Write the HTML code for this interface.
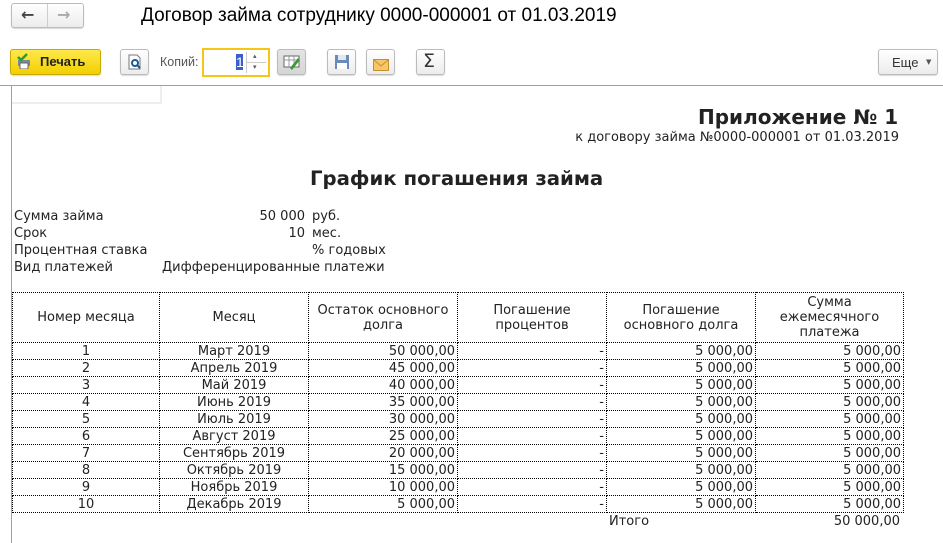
<!DOCTYPE html>
<html><head><meta charset="utf-8"><style>
*{margin:0;padding:0;box-sizing:border-box}
body{width:943px;height:543px;overflow:hidden;background:#fff;position:relative;font-family:"DejaVu Sans",Verdana,sans-serif;color:#222}
.a{position:absolute;white-space:nowrap}
.btn{position:absolute;border:1px solid #bbb;border-radius:3px;background:linear-gradient(#fff,#ececec);box-shadow:0 1px 1px rgba(0,0,0,.15)}
.t{font-size:13px}
table{position:absolute;left:12px;top:292px;border-collapse:collapse;table-layout:fixed;font-size:13px}
td{border:1px dotted #000;height:17px;line-height:15px;padding:1px 2px 0;white-space:nowrap;overflow:hidden}
td.c{text-align:center}td.r{text-align:right}
tr.h td{height:50px;text-align:center;white-space:normal;line-height:15px;padding:0 5px}
</style></head><body>
<div class="btn" style="left:11px;top:3px;width:73px;height:25px"></div>
<div class="a" style="left:47px;top:4px;width:1px;height:23px;background:#ccc"></div>
<div class="a" style="left:21px;top:5px;font-size:16px;font-weight:bold;color:#444">&#8592;</div>
<div class="a" style="left:57px;top:5px;font-size:16px;font-weight:bold;color:#aaa">&#8594;</div>
<div class="a" style="left:141px;top:5px;font-family:'Liberation Sans',sans-serif;font-size:19px;color:#000">Договор займа сотруднику 0000-000001 от 01.03.2019</div>

<div class="btn" style="left:10px;top:49px;width:91px;height:26px;background:linear-gradient(#ffe94a,#f2cf00);border-color:#c9a800"></div>
<div class="a" style="left:16px;top:53px;width:16px;height:16px"><svg width="16" height="16"><rect x="2" y="7" width="12" height="6" fill="#7a8a9a"/><rect x="4" y="10" width="8" height="6" fill="#fff" stroke="#666"/><path d="M2 4l3 3 6-6" stroke="#2a9a3a" stroke-width="2.5" fill="none"/></svg></div>
<div class="a" style="left:40px;top:54px;font-family:'Liberation Sans',sans-serif;font-size:13px;font-weight:bold;color:#222">Печать</div>
<div class="btn" style="left:120px;top:49px;width:29px;height:26px"></div>
<div class="a" style="left:127px;top:54px"><svg width="16" height="16"><path d="M2 1h8l3 3v11H2z" fill="#fff" stroke="#777"/><circle cx="8" cy="9" r="3" fill="none" stroke="#1a5a9a" stroke-width="2"/><path d="M10 11l3 3" stroke="#1a5a9a" stroke-width="2"/></svg></div>
<div class="a" style="left:160px;top:55px;font-family:'Liberation Sans',sans-serif;font-size:12.5px;color:#555">Копий:</div>
<div class="a" style="left:202px;top:48px;width:68px;height:29px;border:2px solid #f5c518;background:#fff"></div>
<div class="a" style="left:236px;top:54px;width:7px;height:16px;background:#3a5fcd;color:#fff;font-family:'Liberation Sans',sans-serif;font-size:14px;line-height:16px">1</div>
<div class="a" style="left:246px;top:52px;width:1px;height:21px;background:#ccc"></div>
<div class="a" style="left:247px;top:62px;width:19px;height:1px;background:#ccc"></div>
<div class="a" style="left:253px;top:52px;font-size:7px;color:#555">&#9652;</div>
<div class="a" style="left:253px;top:63px;font-size:7px;color:#555">&#9662;</div>
<div class="btn" style="left:277px;top:49px;width:29px;height:26px;background:linear-gradient(#e4e4e4,#d6d6d6)"></div>
<div class="a" style="left:283px;top:54px"><svg width="18" height="16"><rect x="1" y="2" width="15" height="11" fill="#fff" stroke="#666"/><path d="M1 6h15M6 2v11M11 2v11" stroke="#999"/><path d="M7 14l8-10 2 2-8 10z" fill="#3a9a3a"/></svg></div>
<div class="btn" style="left:327px;top:49px;width:29px;height:26px"></div>
<div class="a" style="left:334px;top:54px"><svg width="16" height="16"><rect x="1" y="1" width="14" height="14" fill="#6a8ab8"/><rect x="4" y="1" width="8" height="5" fill="#e0e8f4"/><rect x="3" y="9" width="10" height="6" fill="#fff"/></svg></div>
<div class="btn" style="left:366px;top:49px;width:29px;height:26px"></div>
<div class="a" style="left:373px;top:56px"><svg width="16" height="12"><rect x="0.5" y="0.5" width="15" height="11" fill="#f6c66a" stroke="#c8902a"/><path d="M1 1l7 6 7-6" stroke="#c8902a" fill="none"/></svg></div>
<div class="btn" style="left:416px;top:49px;width:29px;height:26px"></div>
<div class="a" style="left:423px;top:50px;font-size:19px;color:#333">Σ</div>
<div class="btn" style="left:878px;top:49px;width:60px;height:26px"></div>
<div class="a" style="left:892px;top:55px;font-family:'Liberation Sans',sans-serif;font-size:13px;color:#333">Еще</div>
<div class="a" style="left:926px;top:58px;font-size:7px;color:#555">&#9660;</div>

<div class="a" style="left:0;top:85px;width:943px;height:1px;background:#a0a0a0"></div>
<div class="a" style="left:11px;top:86px;width:1px;height:457px;background:#a0a0a0"></div>
<div class="a" style="left:12px;top:86px;width:150px;height:18px;border-right:2px solid #eee;border-bottom:2px solid #eee"></div>

<div class="a" style="left:698px;top:105px;font-size:20px;font-weight:bold;color:#222">Приложение № 1</div>
<div class="a t" style="right:44px;top:130px">к договору займа №0000-000001 от 01.03.2019</div>
<div class="a" style="left:310px;top:167px;font-size:19.7px;font-weight:bold;color:#222">График погашения займа</div>

<div class="a t" style="left:14px;top:209px">Сумма займа</div>
<div class="a t" style="left:14px;top:226px">Срок</div>
<div class="a t" style="left:14px;top:243px">Процентная ставка</div>
<div class="a t" style="left:14px;top:260px">Вид платежей</div>
<div class="a t" style="right:638px;top:209px">50 000</div>
<div class="a t" style="right:638px;top:226px">10</div>
<div class="a t" style="left:312px;top:209px">руб.</div>
<div class="a t" style="left:312px;top:226px">мес.</div>
<div class="a t" style="left:312px;top:243px">% годовых</div>
<div class="a t" style="left:162px;top:260px">Дифференцированные платежи</div>

<table>
<colgroup><col style="width:147px"><col style="width:149px"><col style="width:149px"><col style="width:149px"><col style="width:149px"><col style="width:148px"></colgroup>
<tr class="h"><td>Номер месяца</td><td>Месяц</td><td>Остаток основного долга</td><td>Погашение процентов</td><td>Погашение основного долга</td><td>Сумма ежемесячного платежа</td></tr>
<tr><td class="c">1</td><td class="c">Март 2019</td><td class="r">50 000,00</td><td class="r">-</td><td class="r">5 000,00</td><td class="r">5 000,00</td></tr>
<tr><td class="c">2</td><td class="c">Апрель 2019</td><td class="r">45 000,00</td><td class="r">-</td><td class="r">5 000,00</td><td class="r">5 000,00</td></tr>
<tr><td class="c">3</td><td class="c">Май 2019</td><td class="r">40 000,00</td><td class="r">-</td><td class="r">5 000,00</td><td class="r">5 000,00</td></tr>
<tr><td class="c">4</td><td class="c">Июнь 2019</td><td class="r">35 000,00</td><td class="r">-</td><td class="r">5 000,00</td><td class="r">5 000,00</td></tr>
<tr><td class="c">5</td><td class="c">Июль 2019</td><td class="r">30 000,00</td><td class="r">-</td><td class="r">5 000,00</td><td class="r">5 000,00</td></tr>
<tr><td class="c">6</td><td class="c">Август 2019</td><td class="r">25 000,00</td><td class="r">-</td><td class="r">5 000,00</td><td class="r">5 000,00</td></tr>
<tr><td class="c">7</td><td class="c">Сентябрь 2019</td><td class="r">20 000,00</td><td class="r">-</td><td class="r">5 000,00</td><td class="r">5 000,00</td></tr>
<tr><td class="c">8</td><td class="c">Октябрь 2019</td><td class="r">15 000,00</td><td class="r">-</td><td class="r">5 000,00</td><td class="r">5 000,00</td></tr>
<tr><td class="c">9</td><td class="c">Ноябрь 2019</td><td class="r">10 000,00</td><td class="r">-</td><td class="r">5 000,00</td><td class="r">5 000,00</td></tr>
<tr><td class="c">10</td><td class="c">Декабрь 2019</td><td class="r">5 000,00</td><td class="r">-</td><td class="r">5 000,00</td><td class="r">5 000,00</td></tr>
</table>
<div class="a t" style="left:609px;top:514px">Итого</div>
<div class="a t" style="right:43px;top:514px">50 000,00</div>
</body></html>
